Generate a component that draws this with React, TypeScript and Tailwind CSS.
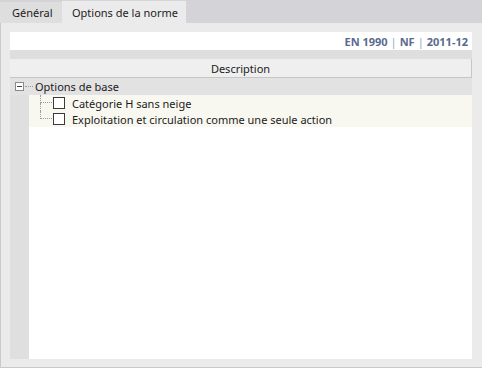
import { Fragment } from 'react';

const children = [
    'Catégorie H sans neige',
    'Exploitation et circulation comme une seule action',
];

export default function App() {
    return (
        <div className="w-[482px] h-[368px] flex flex-col bg-[#d3d3d8] font-['Noto_Sans',sans-serif] text-[11px] leading-none text-[#1b1b1b] whitespace-nowrap">
            {/* Tabs */}
            <div className="flex items-end h-[23px] shrink-0">
                <div className="h-[21px] w-[62px] flex items-center pl-[12px] bg-[#dedede]">Général</div>
                <div className="h-[22px] w-[124px] flex items-center pl-[10px] bg-[#ebebeb]">Options de la norme</div>
            </div>

            {/* Body */}
            <div className="flex-1 flex flex-col bg-[#ebebeb] border-l border-b border-[#c9c9cf] pl-[9px] pr-[10px] pt-[9px] pb-[8px]">
                <div className="h-[18px] shrink-0 bg-white flex items-center justify-end pr-[4px] font-bold text-[#5a6a8e]">
                    EN 1990 <span className="mx-[3px] font-normal text-[#8ea4cc]">|</span> NF <span className="mx-[3px] font-normal text-[#8ea4cc]">|</span> 2011-12
                </div>
                <div className="h-[9px] shrink-0 bg-[#dedede]" />
                <div className="h-[19px] shrink-0 bg-[#efefef] border-r border-b border-[#c6c6c6] flex items-center justify-center">
                    Description
                </div>

                <div className="flex-1 flex flex-col bg-white">
                    {/* group row */}
                    <div className="h-[17px] flex items-center bg-[#e2e2e2]">
                        <div className="ml-[5px] w-[9px] h-[9px] border border-[#8a8a8a] bg-white flex items-center justify-center">
                            <div className="w-[5px] h-px bg-[#444]" />
                        </div>
                        <div className="w-[8px] ml-[1px] border-t border-dotted border-[#9a9a9a]" />
                        <span className="ml-[2px]">Options de base</span>
                    </div>
                    {children.map((label, i) => (
                        <Fragment key={label}>
                            <div className="h-[16px] flex">
                                <div className="w-[19px] bg-[#dfdfdf]" />
                                <div className="flex-1 flex items-center bg-[#f8f8f1]">
                                    <div className="ml-[11px] w-[12px] h-full flex flex-col">
                                        <div className="h-[8px] border-l border-b border-dotted border-[#9a9a9a]" />
                                        <div className={`flex-1 ${i < children.length - 1 ? 'border-l border-dotted border-[#9a9a9a]' : ''}`} />
                                    </div>
                                    <div className="ml-[1px] w-[12px] h-[12px] border border-[#3a3a3a] bg-white" />
                                    <span className="ml-[7px]">{label}</span>
                                </div>
                            </div>
                        </Fragment>
                    ))}
                    <div className="flex-1 flex">
                        <div className="w-[19px] bg-[#dfdfdf]" />
                        <div className="flex-1" />
                    </div>
                </div>
            </div>
        </div>
    );
}
